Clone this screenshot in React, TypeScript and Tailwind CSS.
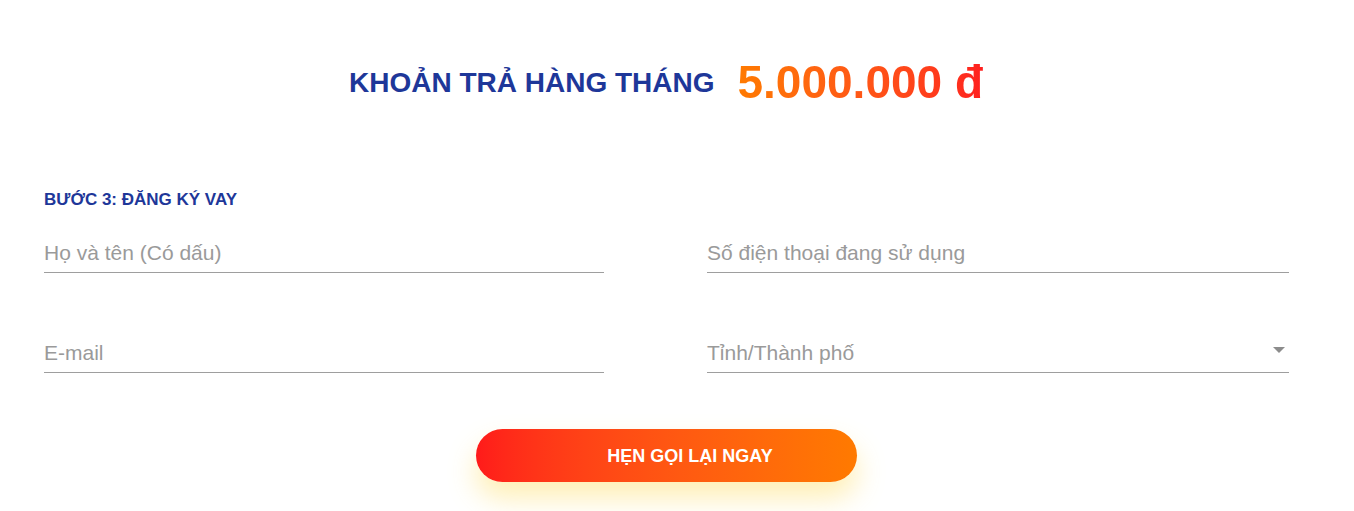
type FieldProps = {
  placeholder: string;
  select?: boolean;
};

function Field({ placeholder, select }: FieldProps) {
  return (
    <div className="flex h-[46px] items-center justify-between border-b border-[#9e9e9e]">
      <span className="pt-[8px] text-[21px] text-[#9a9a9a]">{placeholder}</span>
      {select && (
        <svg width="14" height="8" viewBox="0 0 14 8" className="mr-[3px] mt-[2px]">
          <path d="M1 1h12L7 7z" fill="#8c8c8c" />
        </svg>
      )}
    </div>
  );
}

export default function App() {
  return (
    <div className="h-[511px] w-[1354px] overflow-hidden bg-white font-['Liberation_Sans',Arial,sans-serif]">
      <div className="flex items-center justify-center pt-[48px] pr-[22px]">
        <h2 className="text-[28px] font-bold text-[#1e3799]">KHOẢN TRẢ HÀNG THÁNG</h2>
        <div className="ml-[23px] bg-gradient-to-r from-[#ff7a00] to-[#ff1f1f] bg-clip-text text-[46px] font-bold text-transparent">
          5.000.000 đ
        </div>
      </div>

      <div className="px-[44px] pt-[70px]">
        <div className="text-[17px] font-bold text-[#1e3799]">BƯỚC 3: ĐĂNG KÝ VAY</div>

        <div className="mt-[14px] grid grid-cols-[560px_582px] gap-x-[103px] gap-y-[54px]">
          <Field placeholder="Họ và tên (Có dấu)" />
          <Field placeholder="Số điện thoại đang sử dụng" />
          <Field placeholder="E-mail" />
          <Field placeholder="Tỉnh/Thành phố" select />
        </div>

        <div className="flex justify-center pt-[56px] pr-[22px]">
          <button className="h-[53px] w-[381px] rounded-full bg-gradient-to-r from-[#ff1a1a] to-[#ff7a00] pl-[48px] pt-[3px] text-[18px] font-bold text-white shadow-[0_16px_28px_rgba(255,214,70,0.4)]">
            HẸN GỌI LẠI NGAY
          </button>
        </div>
      </div>
    </div>
  );
}
